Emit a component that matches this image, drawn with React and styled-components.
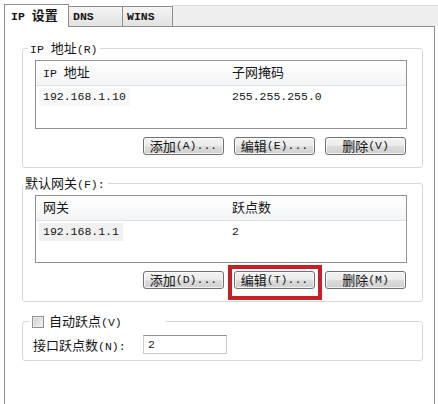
import React from "react";
import styled, { createGlobalStyle } from "styled-components";

const GlobalStyle = createGlobalStyle`
  body {
    margin: 0;
    background: #ffffff;
  }
  * {
    box-sizing: border-box;
  }
`;

function Dialog() {
  return (
    <Window>
      <TabStrip>
        <Tab $active $w={65}>
          <TabText>
            IP <Zh>设置</Zh>
          </TabText>
        </Tab>
        <Tab $w={55}>
          <TabText>DNS</TabText>
        </Tab>
        <Tab $w={51}>
          <TabText>WINS</TabText>
        </Tab>
        <TabFill />
      </TabStrip>

      <Panel>
        <Group>
          <Legend $x={-7}>
            IP <Zh>地址</Zh>(R)
          </Legend>
          <List $h={69}>
            <ListHead>
              <Cell>
                IP <Zh>地址</Zh>
              </Cell>
              <Cell>
                <Zh>子网掩码</Zh>
              </Cell>
            </ListHead>
            <ListRow>
              <Cell>
                <Picked>192.168.1.10</Picked>
              </Cell>
              <Cell>255.255.255.0</Cell>
            </ListRow>
          </List>
          <ButtonRow>
            <Button>
              <Zh>添加</Zh>(A)...
            </Button>
            <Button>
              <Zh>编辑</Zh>(E)...
            </Button>
            <Button>
              <Zh>删除</Zh>(V)
            </Button>
          </ButtonRow>
        </Group>

        <Group>
          <Legend $x={-12}>
            <Zh>默认网关</Zh>(F):
          </Legend>
          <List $h={68}>
            <ListHead>
              <Cell>
                <Zh>网关</Zh>
              </Cell>
              <Cell>
                <Zh>跃点数</Zh>
              </Cell>
            </ListHead>
            <ListRow>
              <Cell>
                <Picked $shade>192.168.1.1</Picked>
              </Cell>
              <Cell>2</Cell>
            </ListRow>
          </List>
          <ButtonRow>
            <Button>
              <Zh>添加</Zh>(D)...
            </Button>
            <Marked>
              <Button>
                <Zh>编辑</Zh>(T)...
              </Button>
            </Marked>
            <Button>
              <Zh>删除</Zh>(M)
            </Button>
          </ButtonRow>
        </Group>

        <HopGroup>
          <Legend $x={-3} $pr={44}>
            <CheckBox />
            <Zh>自动跃点</Zh>(V)
          </Legend>
          <HopRow>
            <HopLabel>
              <Zh>接口跃点数</Zh>(N):
            </HopLabel>
            <HopInput defaultValue="2" />
          </HopRow>
        </HopGroup>
      </Panel>
    </Window>
  );
}

export default function App() {
  return (
    <>
      <GlobalStyle />
      <Dialog />
    </>
  );
}

const Window = styled.div`
  width: 438px;
  height: 404px;
  padding: 4px 0 0 4px;
  overflow: hidden;
  font-family: "Liberation Mono", "Noto Sans CJK SC", monospace;
  font-size: 11.5px;
  color: #151515;
`;

const Zh = styled.span`
  font-family: "Noto Sans CJK SC", sans-serif;
  font-size: 13px;
`;

const TabStrip = styled.div`
  display: flex;
  align-items: flex-end;
  height: 22px;
`;

const Tab = styled.div`
  position: relative;
  z-index: ${(p) => (p.$active ? 2 : 1)};
  width: ${(p) => p.$w}px;
  height: ${(p) => (p.$active ? 23 : 20)}px;
  margin-bottom: ${(p) => (p.$active ? -1 : 0)}px;
  padding-left: ${(p) => (p.$active ? 6 : 4)}px;
  display: flex;
  align-items: center;
  border: 1px solid #8c8f96;
  border-bottom: none;
  background: ${(p) =>
    p.$active ? "#ffffff" : "linear-gradient(#f4f4f4, #e2e2e2)"};
  font-weight: bold;

  & + & {
    margin-left: -1px;
  }
`;

const TabText = styled.span`
  line-height: 16px;
  white-space: nowrap;
`;

const TabFill = styled.div`
  flex: 1;
  height: 21px;
  margin-left: -1px;
  background: #eeeeee;
  border-top: 1px solid #dadada;
`;

const Panel = styled.div`
  width: 431px;
  height: 378px;
  border: 1px solid #8c8f96;
  border-bottom: none;
  padding: 13px 11px 0 17px;
  display: flex;
  flex-direction: column;
  gap: 7px;
`;

const Group = styled.fieldset`
  width: 401px;
  min-width: 0;
  margin: 0;
  padding: 4px 15px 12px 12px;
  border: 1px solid #d6d9dc;
  border-radius: 3px;
`;

const Legend = styled.legend`
  height: 16px;
  line-height: 16px;
  margin-left: ${(p) => p.$x}px;
  padding: 0 ${(p) => p.$pr || 3}px 0 2px;
  white-space: nowrap;
`;

const List = styled.div`
  height: ${(p) => p.$h}px;
  border: 1px solid #8f9398;
  background: #ffffff;
`;

const ListHead = styled.div`
  display: grid;
  grid-template-columns: 189px 1fr;
  align-items: center;
  height: 25px;
  background: linear-gradient(#ffffff, #f3f4f6);
  border-bottom: 1px solid #e1e2e4;
  padding-left: 4px;
`;

const ListRow = styled.div`
  display: grid;
  grid-template-columns: 189px 1fr;
  align-items: center;
  height: 22px;
  padding-left: 4px;
`;

const Cell = styled.div`
  padding-left: 3px;
  line-height: 16px;
  white-space: nowrap;
`;

const Picked = styled.span`
  display: inline-block;
  margin-left: -4px;
  padding: 1px 4px;
  background: ${(p) => (p.$shade ? "#f0f0f0" : "#f8f8f8")};
`;

const ButtonRow = styled.div`
  display: flex;
  justify-content: flex-end;
  gap: 10px;
  margin-top: 8px;
  padding-right: 1px;
`;

const Button = styled.button`
  width: 81px;
  height: 18px;
  padding: 0;
  display: flex;
  align-items: center;
  justify-content: center;
  border: 1px solid #707070;
  border-radius: 3px;
  background: linear-gradient(#f2f2f2 0%, #ebebeb 50%, #dddddd 51%, #cfcfcf 100%);
  box-shadow: inset 0 0 0 1px rgba(255, 255, 255, 0.7);
  font: inherit;
  color: #151515;
  line-height: 16px;
  white-space: nowrap;
`;

const Marked = styled.span`
  position: relative;
  display: inline-flex;

  &::after {
    content: "";
    position: absolute;
    left: -6px;
    right: -7px;
    top: -6px;
    bottom: -11px;
    border: 4px solid #c81e24;
    pointer-events: none;
  }
`;

const HopGroup = styled(Group)`
  margin-top: 4px;
  padding: 6px 15px 6px 10px;
`;

const CheckBox = styled.span`
  display: inline-block;
  width: 12px;
  height: 12px;
  margin-right: 5px;
  vertical-align: -2px;
  border: 1px solid #8e8f8f;
  background: linear-gradient(135deg, #cfcfcf, #f2f2f2);
  box-shadow: inset 0 0 0 1px #ececec;
`;

const HopRow = styled.div`
  display: flex;
  align-items: center;
`;

const HopLabel = styled.span`
  width: 110px;
  white-space: nowrap;
`;

const HopInput = styled.input`
  width: 84px;
  height: 19px;
  padding: 0 4px;
  border: 1px solid #c9cbd0;
  border-top-color: #8e9198;
  font: inherit;
  color: #151515;
  outline: none;
`;
